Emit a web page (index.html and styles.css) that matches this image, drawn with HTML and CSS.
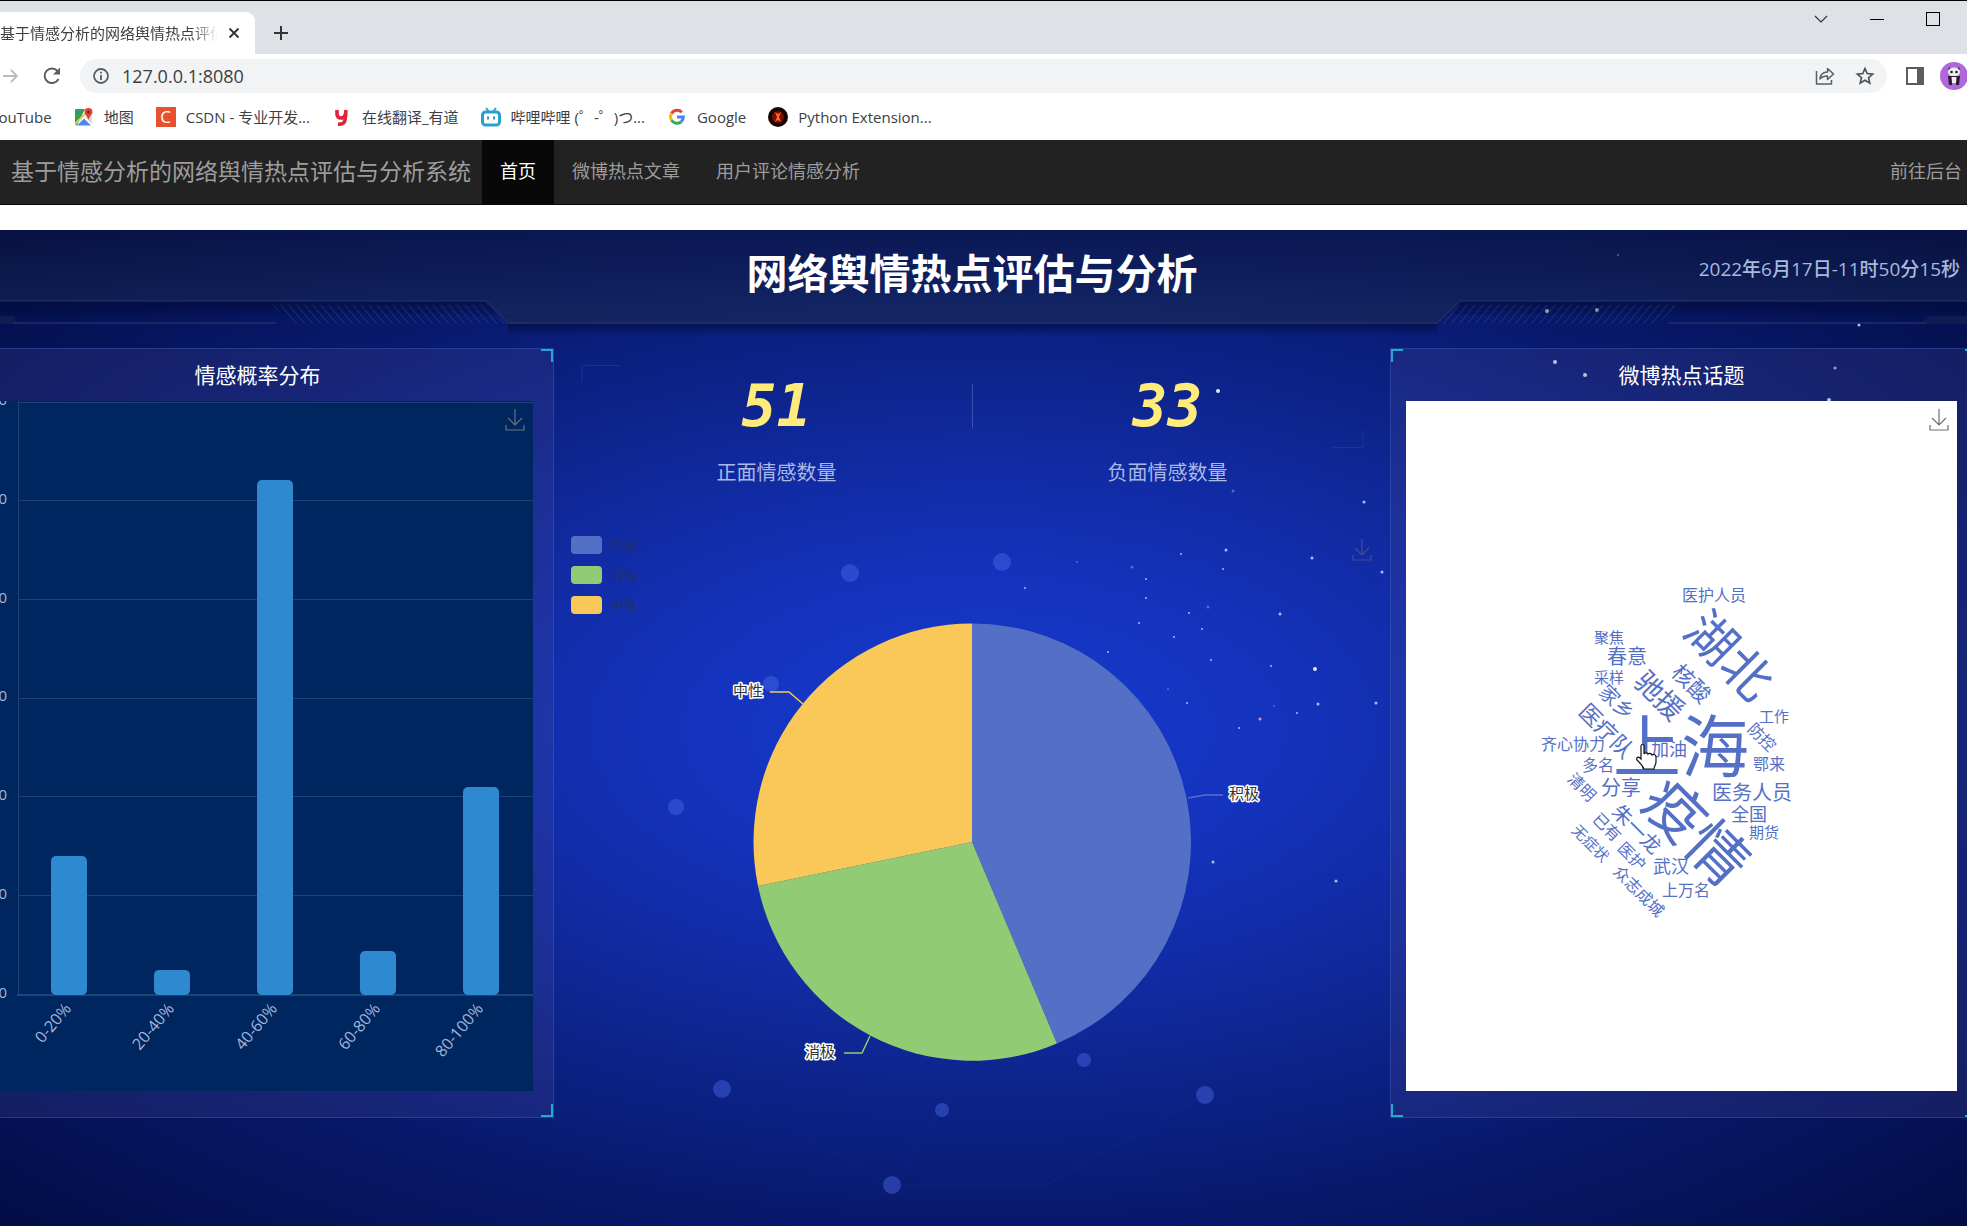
FILE: index.html
```html
<!DOCTYPE html>
<html lang="zh-CN">
<head>
<meta charset="utf-8">
<title>基于情感分析的网络舆情热点评估与分析系统</title>
<link rel="stylesheet" href="styles.css">
</head>
<body>
<div class="browser">
  <div class="tabstrip">
    <div class="tab">
      <span class="tab-title">基于情感分析的网络舆情热点评估</span>
      <button class="icon-btn" aria-label="关闭标签页"><svg width="12" height="12" viewBox="0 0 12 12"><path d="M1.500 1.500l9 9M10.500 1.500l-9 9" stroke="#333" stroke-width="1.800"/></svg></button>
    </div>
    <button class="icon-btn new-tab" aria-label="新标签页"><svg width="16" height="16" viewBox="0 0 16 16"><path d="M8 1v14M1 8h14" stroke="#333" stroke-width="2"/></svg></button>
    <div class="window-controls">
      <button class="icon-btn" aria-label="搜索标签页"><svg width="14" height="14" viewBox="0 0 14 14"><path d="M1 4l6 6 6-6" fill="none" stroke="#333" stroke-width="1.200"/></svg></button>
      <button class="icon-btn" aria-label="最小化"><svg width="14" height="14" viewBox="0 0 14 14"><path d="M0 7.500h14" stroke="#000" stroke-width="1"/></svg></button>
      <button class="icon-btn" aria-label="最大化"><svg width="14" height="14" viewBox="0 0 14 14"><rect x=".5" y=".5" width="13" height="13" fill="none" stroke="#000"/></svg></button>
    </div>
  </div>
  <div class="toolbar">
    <button class="icon-btn" aria-label="前进"><svg width="18" height="16" viewBox="0 0 18 16"><path d="M1 8h14M9 2l6 6-6 6" fill="none" stroke="#b9bbbe" stroke-width="1.800"/></svg></button>
    <button class="icon-btn" aria-label="重新加载"><svg width="20" height="20" viewBox="0 0 20 20"><path d="M16.500 13A7.300 7.300 0 1 1 15.500 5" fill="none" stroke="#5a5d61" stroke-width="2"/><path d="M18 1.500v7h-7z" fill="#5a5d61"/></svg></button>
    <div class="omnibox">
      <svg width="18" height="18" viewBox="0 0 18 18"><circle cx="9" cy="9" r="7" fill="none" stroke="#5a5d61" stroke-width="1.800"/><path d="M9 8v5M9 4.800v1.800" stroke="#5a5d61" stroke-width="1.800"/></svg>
      <input class="url" type="text" aria-label="地址栏" value="127.0.0.1:8080">
      <button class="icon-btn" aria-label="分享"><svg width="20" height="20" viewBox="0 0 20 20"><path d="M1.500 5v13h15v-4M5 13c.5-5 3-7 7.500-7V2.500l6 5.500-6 5.500V10C9 10 7 10.500 5 13z" fill="none" stroke="#5a5d61" stroke-width="1.500" stroke-linejoin="round"/></svg></button>
      <button class="icon-btn" aria-label="收藏"><svg width="20" height="20" viewBox="0 0 20 20"><path d="M10 2.500l2.200 5.100 5.500.5-4.200 3.600 1.300 5.400L10 14.200l-4.800 2.900 1.300-5.400-4.200-3.600 5.500-.5z" fill="none" stroke="#4b4e52" stroke-width="1.600"/></svg></button>
    </div>
    <button class="icon-btn" aria-label="侧边栏"><svg width="18" height="18" viewBox="0 0 18 18"><rect x="1" y="1" width="16" height="16" fill="#fff" stroke="#5a5d61" stroke-width="2"/><path d="M11 1h6v16h-6z" fill="#5a5d61"/></svg></button>
    <button class="icon-btn avatar" aria-label="用户"><svg width="28" height="28" viewBox="0 0 28 28"><circle cx="14" cy="14" r="14" fill="#b067dc"/><path d="M8 8l1-3 2 2zM20 8l-1-3-2 2z" fill="#2b2b2b"/><ellipse cx="14" cy="10" rx="6" ry="4.500" fill="#eee"/><circle cx="11.500" cy="10" r="1.300" fill="#222"/><circle cx="16.500" cy="10" r="1.300" fill="#222"/><path d="M8 14h12l-1 9h-3v-5h-4v5H9z" fill="#2a1a33"/><path d="M11.500 15h5l-.5 6h-4z" fill="#eee"/></svg></button>
  </div>
  <nav class="bookmarks" aria-label="书签">
    <a href="#">YouTube</a>
    <a href="#"><svg width="20" height="20" viewBox="0 0 20 20"><path d="M1 3q0-1 1-1h9L3 18.500q-2 0-2-2z" fill="#30a058"/><path d="M3 18.500l7-7 7 7z" fill="#4a8af0"/><path d="M11 10l7 7V9z" fill="#d5d8dc"/><path d="M1 17L13 5" stroke="#fbc33a" stroke-width="2"/><path d="M14.500 1a4 4 0 0 1 4 4c0 3-3 4-4 8-1-4-4-5-4-8a4 4 0 0 1 4-4z" fill="#e04438"/><circle cx="14.500" cy="5" r="1.500" fill="#801f18"/></svg>地图</a>
    <a href="#"><span class="csdn">C</span>CSDN - 专业开发...</a>
    <a href="#"><svg width="20" height="20" viewBox="0 0 20 20"><path d="M5 3v4q0 4 4 4 4 0 4.500-4l.5-4M14 6l-1 7q-1 5-7 4" fill="none" stroke="#e0243c" stroke-width="3.600"/></svg>在线翻译_有道</a>
    <a href="#"><svg width="20" height="20" viewBox="0 0 20 20"><path d="M5 1l3 4M15 1l-3 4" stroke="#2ba0cc" stroke-width="2"/><rect x="1.500" y="5" width="17" height="13" rx="3" fill="#fff" stroke="#2ba0cc" stroke-width="3"/><path d="M7 9.500v3M13 9.500v3" stroke="#2ba0cc" stroke-width="2"/></svg>哔哩哔哩 (゜-゜)つ...</a>
    <a href="#"><svg width="20" height="20" viewBox="0 0 20 20"><g fill="none" stroke-width="3"><path d="M4.500 6.500A6.500 6.500 0 0 1 14.800 5.200" stroke="#e04438"/><path d="M4.500 13.200a6.500 6.500 0 0 1 0-6.700" stroke="#fbbc05"/><path d="M14 15a6.500 6.500 0 0 1-9.500-1.800" stroke="#34a853"/><path d="M10 10h6.300a6.500 6.500 0 0 1-2.300 5" stroke="#4285f4"/></g></svg>Google</a>
    <a href="#"><svg width="20" height="20" viewBox="0 0 20 20"><circle cx="10" cy="10" r="10" fill="#180402"/><circle cx="10" cy="10" r="6" fill="#7c0d03"/><path d="M7 5l3 2 3-2-2 5 2 5-3-2-3 2 2-5z" fill="#ff6a20"/></svg>Python Extension...</a>
  </nav>
</div>

<header class="navbar">
  <a class="brand" href="#">基于情感分析的网络舆情热点评估与分析系统</a>
  <nav class="menu" aria-label="主导航">
    <a class="active" href="#">首页</a>
    <a href="#">微博热点文章</a>
    <a href="#">用户评论情感分析</a>
  </nav>
  <a class="admin" href="#">前往后台</a>
</header>

<main class="dash">
  <svg class="sky" viewBox="0 0 1967 996" preserveAspectRatio="xMidYMin slice" aria-hidden="true">
    <g fill="#4a68e6" opacity=".45">
      <circle cx="850" cy="343" r="9"/><circle cx="1002" cy="332" r="9"/><circle cx="771" cy="454" r="8"/><circle cx="676" cy="577" r="8"/><circle cx="722" cy="859" r="9"/><circle cx="942" cy="880" r="7"/><circle cx="1084" cy="830" r="7"/><circle cx="1205" cy="865" r="9"/><circle cx="892" cy="955" r="9"/>
    </g>
    <g fill="none" stroke="#3048c0" opacity=".15"><path d="M722 859L892 955 942 880M900 956h144L1205 865M1080 780v90"/></g>
    <g fill="none" stroke="#3c55c8" opacity=".3"><path d="M582 152V135.500H620M1363 200V217.500H1332"/></g>
    <g fill="#dfeaf0">
      <circle cx="1547" cy="81" r="2"/><circle cx="1597" cy="80" r="2"/><circle cx="1555" cy="132" r="2"/><circle cx="1585" cy="145" r="2"/><circle cx="1218" cy="161" r="2"/><circle cx="1315" cy="439" r="2"/><circle cx="1829" cy="170" r="2"/>
    </g>
    <g fill="#a9bdf0">
      <circle cx="1618" cy="25" r="1"/><circle cx="1859" cy="95" r="1.500"/><circle cx="1835" cy="138" r="1.500"/><circle cx="1364" cy="272" r="1.500"/><circle cx="1312" cy="328" r="1.500"/><circle cx="1226" cy="320" r="1.500"/><circle cx="1181" cy="324" r="1"/><circle cx="1223" cy="339" r="1"/><circle cx="1146" cy="349" r="1"/><circle cx="1025" cy="358" r="1"/><circle cx="1146" cy="368" r="1"/><circle cx="1189" cy="383" r="1"/><circle cx="1280" cy="384" r="1.500"/><circle cx="1139" cy="393" r="1"/><circle cx="1202" cy="399" r="1"/><circle cx="1174" cy="407" r="1"/><circle cx="1108" cy="422" r="1"/><circle cx="1211" cy="430" r="1"/><circle cx="1271" cy="436" r="1"/><circle cx="1187" cy="473" r="1"/><circle cx="1318" cy="474" r="1.500"/><circle cx="1297" cy="483" r="1"/><circle cx="1239" cy="498" r="1"/><circle cx="1376" cy="473" r="1.500"/><circle cx="1213" cy="632" r="1.500"/><circle cx="1336" cy="651" r="1.500"/><circle cx="1382" cy="342" r="1.500"/>
    </g>
    <g fill="#6f86dd" opacity=".7"><circle cx="1233" cy="261" r="1.500"/><circle cx="1077" cy="332" r="1"/><circle cx="1132" cy="337" r="1.500"/><circle cx="1208" cy="377" r="1.500"/><circle cx="1168" cy="459" r="1"/><circle cx="1274" cy="476" r="1"/></g>
    <circle cx="1260" cy="489" r="1.500" fill="#e89a8a"/>
  </svg>
  <svg class="frame" viewBox="0 0 1967 100" preserveAspectRatio="none" aria-hidden="true">
    <defs>
      <linearGradient id="band" x1="0" y1="0" x2="0" y2="1"><stop offset="0" stop-color="#0c1740" stop-opacity=".5"/><stop offset="1" stop-color="#192b58" stop-opacity=".65"/></linearGradient>
      <linearGradient id="shade" x1="0" y1="0" x2="0" y2="1"><stop offset="0" stop-color="#020a38" stop-opacity=".6"/><stop offset="1" stop-color="#020a38" stop-opacity="0"/></linearGradient>
      <pattern id="hatchL" width="8" height="20" patternUnits="userSpaceOnUse" patternTransform="skewX(40)"><path d="M2 0v20" stroke="#2b3d80" stroke-width="2"/></pattern>
      <pattern id="hatchR" width="8" height="20" patternUnits="userSpaceOnUse" patternTransform="skewX(-40)"><path d="M2 0v20" stroke="#2b3d80" stroke-width="2"/></pattern>
    </defs>
    <path d="M0 71H486L508 94H1437L1460 71H1967V85H0z" fill="url(#shade)"/>
    <path d="M508 94H1437V106H508z" fill="url(#shade)"/>
    <path d="M0 0H1967V71H1460L1437 94H508L486 71H0z" fill="url(#band)"/>
    <path d="M0 71H486L508 93H1437L1460 71H1967" fill="none" stroke="#26356a" stroke-opacity=".5" stroke-width="2"/>
    <path d="M0 86h14l4 8H0zM1967 86h-38l-8 8h46z" fill="#1a2850" opacity=".5"/>
    <path d="M14 93h262M1925 93h-257" fill="none" stroke="#25356e" stroke-opacity=".6" stroke-width="2"/>
    <path d="M272 75H486L506 94H292z" fill="url(#hatchL)" opacity=".4"/>
    <path d="M1457 75H1678L1658 94H1437z" fill="url(#hatchR)" opacity=".4"/>
  </svg>
  <div class="stage">
    <div class="dash-head">
      <h1>网络舆情热点评估与分析</h1>
      <time class="clock">2022年6月17日-11时50分15秒</time>
    </div>
    <div class="columns">
      <section class="panel">
        <h2>情感概率分布</h2>
        <div class="chart chart-bar">
          <svg class="plot" viewBox="0 0 551 690" role="img" aria-label="情感概率分布">
            <g class="grid"><path d="M37 1.500H551M37 99.500H551M37 198.500H551M37 297.500H551M37 395.500H551M37 494.500H551M36.500 0V594"/></g>
            <path class="axis" d="M35 594H551"/>
            <g class="bars"><rect x="69" y="455" width="36" height="139" rx="5"/><rect x="172" y="569" width="36" height="25" rx="5"/><rect x="275" y="79" width="36" height="515" rx="5"/><rect x="378" y="550" width="36" height="44" rx="5"/><rect x="481" y="386" width="36" height="208" rx="5"/></g>
            <g class="ylab"><text x="25" y="4">120</text><text x="25" y="103">100</text><text x="25" y="202">80</text><text x="25" y="300">60</text><text x="25" y="399">40</text><text x="25" y="498">20</text><text x="25" y="597">0</text></g>
            <g class="xlab"><text transform="translate(90 608) rotate(-50)">0-20%</text><text transform="translate(193 608) rotate(-50)">20-40%</text><text transform="translate(296 608) rotate(-50)">40-60%</text><text transform="translate(399 608) rotate(-50)">60-80%</text><text transform="translate(502 608) rotate(-50)">80-100%</text></g>
          </svg>
          <button class="save" aria-label="保存为图片"><svg width="20" height="24" viewBox="0 0 20 24"><path d="M10 1v16M3 10l7 7 7-7M1 17v5h18v-5" fill="none" stroke="currentColor" stroke-width="1.200"/></svg></button>
        </div>
      </section>

      <section class="center">
        <div class="counts">
          <div class="count"><strong>51</strong><span>正面情感数量</span></div>
          <div class="count"><strong>33</strong><span>负面情感数量</span></div>
        </div>
        <div class="chart-pie">
          <ul class="legend"><li class="pos">积极</li><li class="neg">消极</li><li class="mid">中性</li></ul>
          <svg class="plot" viewBox="-418 -322 836 644" role="img" aria-label="情感占比">
            <path d="M0 0V-218.500A218.500 218.500 0 0 1 85 201.500z" fill="#5470c6"/>
            <path d="M0 0L85 201.500A218.500 218.500 0 0 1-214 44z" fill="#91cc75"/>
            <path d="M0 0L-214 44A218.500 218.500 0 0 1 0-218.500z" fill="#fac858"/>
            <g fill="none" stroke-width="1.500"><path d="M216-44l17-3h18" stroke="#5470c6"/><path d="M-102 194l-8 17h-18" stroke="#91cc75"/><path d="M-169-138l-14-12h-19" stroke="#fac858"/></g>
            <g class="slice"><text x="272" y="-43">积极</text><text x="-152" y="215">消极</text><text x="-224" y="-146">中性</text></g>
          </svg>
          <button class="save" aria-label="保存为图片"><svg width="20" height="24" viewBox="0 0 20 24"><path d="M10 1v16M3 10l7 7 7-7M1 17v5h18v-5" fill="none" stroke="currentColor" stroke-width="1.200"/></svg></button>
        </div>
      </section>

      <section class="panel">
        <h2>微博热点话题</h2>
        <div class="chart chart-words">
          <svg class="plot" viewBox="0 0 551 690" role="img" aria-label="微博热点话题">
            <g class="words">
              <g class="w68"><text x="275" y="344">上海</text></g>
              <g class="w60"><text transform="translate(291 430) rotate(45)">疫情</text></g>
              <g class="w50"><text transform="translate(324 254) rotate(45)">湖北</text></g>
              <g class="w28"><text transform="translate(254 294) rotate(45)">驰援</text></g>
              <g class="w22"><text transform="translate(286 282) rotate(45)">核酸</text><text transform="translate(201 329) rotate(45)">医疗队</text></g>
              <g class="w20"><text x="221" y="255">春意</text><text x="215" y="386">分享</text><text x="346" y="391">医务人员</text><text transform="translate(231 428) rotate(45)">朱一龙</text><text transform="translate(211 301) rotate(45)">家乡</text></g>
              <g class="w18"><text x="263" y="348">加油</text><text x="343" y="413">全国</text><text x="265" y="465">武汉</text></g>
              <g class="w16"><text x="308" y="194">医护人员</text><text x="167" y="343">齐心协力</text><text x="192" y="364">多名</text><text x="363" y="363">鄂来</text><text x="280" y="489">上万名</text><text transform="translate(356 336) rotate(45)">防控</text><text transform="translate(176 386) rotate(45)">清明</text><text transform="translate(201 426) rotate(45)">已有</text><text transform="translate(226 455) rotate(45)">医护</text><text transform="translate(233 490) rotate(45)">众志成城</text></g>
              <g class="w15"><text x="203" y="236">聚焦</text><text x="203" y="276">采样</text><text x="368" y="315">工作</text><text x="358" y="431">期货</text><text transform="translate(185 442) rotate(45)">无症状</text></g>
            </g>
            <path d="M235 345c0-2 3-2 3 0v8c1-2 4-1 4 0 1-1 3-1 4 1 1-1 4-1 4 2v5c0 3-2 4-2 7h-10c-1-3-5-7-7-9-1-2 1-4 3-2l1 1z" fill="#fff" stroke="#111" stroke-width="1.200"/>
          </svg>
          <button class="save" aria-label="保存为图片"><svg width="20" height="24" viewBox="0 0 20 24"><path d="M10 1v16M3 10l7 7 7-7M1 17v5h18v-5" fill="none" stroke="currentColor" stroke-width="1.200"/></svg></button>
        </div>
      </section>
    </div>
  </div>
</main>
</body>
</html>
```

FILE: styles.css
```css
* { box-sizing: border-box; }

body {
  margin: 0;
  min-height: 100vh;
  display: flex;
  flex-direction: column;
  overflow-x: hidden;
  background: #fff;
  font-family: "Open Sans", "Noto Sans CJK SC", sans-serif;
  font-size: 18px;
}

a { text-decoration: none; color: inherit; }

.icon-btn {
  display: flex;
  align-items: center;
  justify-content: center;
  flex: none;
  padding: 0;
  border: 0;
  background: none;
}

/* Browser window */
.browser { border-top: 1px solid #000; }

.tabstrip {
  display: flex;
  height: 53px;
  padding-top: 11px;
  background: #dee1e6;
}

.tab {
  display: flex;
  align-items: center;
  justify-content: space-between;
  width: 255px;
  padding-right: 15px;
  border-radius: 0 9px 0 0;
  background: #fff;
}

.tab-title {
  width: 218px;
  overflow: hidden;
  white-space: nowrap;
  font-size: 15px;
  line-height: 24px;
  color: #3c4043;
  -webkit-mask-image: linear-gradient(90deg, #000 88%, transparent);
  mask-image: linear-gradient(90deg, #000 88%, transparent);
}

.new-tab { width: 52px; padding-bottom: 1px; }

.window-controls {
  display: flex;
  align-items: flex-start;
  gap: 42px;
  margin-left: auto;
  padding-right: 27px;
}

.toolbar {
  display: flex;
  align-items: center;
  gap: 22px;
  height: 44px;
  padding: 0 0 0 2px;
}

.omnibox {
  display: flex;
  align-items: center;
  flex: 1;
  min-width: 0;
  gap: 12px;
  height: 34px;
  margin-left: -4px;
  padding: 0 12px;
  border-radius: 17px;
  background: #f1f3f4;
}

.url {
  flex: 1;
  min-width: 0;
  padding: 0;
  border: 0;
  outline: 0;
  background: none;
  font: 18px "Open Sans", "Noto Sans CJK SC", sans-serif;
  color: #3c4043;
}

.omnibox .icon-btn + .icon-btn { margin-left: 8px; }
.avatar { margin-left: -6px; margin-right: -1px; }
.omnibox + .icon-btn { margin-left: -3px; }

.bookmarks {
  display: flex;
  align-items: center;
  gap: 22px;
  height: 42px;
  margin-left: -10px;
  padding-bottom: 5px;
  white-space: nowrap;
  font-size: 15px;
  line-height: 20px;
  color: #3c4043;
}

.bookmarks a { display: flex; align-items: center; gap: 10px; }

.csdn {
  width: 20px;
  height: 20px;
  background: #e8512f;
  color: #fff;
  font-size: 17px;
  text-align: center;
}

/* Site navigation */
.navbar {
  display: flex;
  align-items: stretch;
  height: 65px;
  margin-bottom: 25px;
  border-bottom: 1px solid #080808;
  background: #222;
  color: #9d9d9d;
  line-height: 62px;
  white-space: nowrap;
}

.brand { padding: 0 11px; font-size: 23px; }
.menu { display: flex; }
.menu a { padding: 0 18px; }
.menu .active { background: #080808; color: #fff; }
.admin { margin-left: auto; padding-right: 5px; }

/* Dashboard */
.dash {
  position: relative;
  flex: 1;
  overflow: hidden;
  background: radial-gradient(ellipse at 50% 50%, #163bcd 0, #1433bd 22%, #0f2796 45%, #08196c 70%, #020d45 100%);
}

.sky, .frame { position: absolute; inset: 0; width: 100%; height: 100%; }
.frame { height: 100px; overflow: visible; }

.stage { position: relative; margin: 0 -11px 0 -34px; }

.dash-head {
  display: grid;
  grid-template-columns: 1fr auto 1fr;
  align-items: center;
  height: 88px;
  padding: 0 18px 2px;
}

h1 {
  grid-column: 2;
  margin: 0;
  font-size: 41px;
  line-height: 60px;
  color: #fff;
}

.clock {
  justify-self: end;
  padding-bottom: 10px;
  font-size: 19px;
  font-weight: 500;
  color: #a9b8de;
}

.columns {
  display: grid;
  grid-template-columns: minmax(0, 588fr) minmax(0, 836fr) minmax(0, 588fr);
  align-items: start;
  padding: 30px 0 40px;
}

.panel {
  position: relative;
  padding: 0 20px 26px 15px;
  border: 1px solid rgba(80, 120, 210, .3);
  background: rgba(70, 75, 150, .24);
}

.panel::before {
  content: "";
  position: absolute;
  inset: 0;
  --c: linear-gradient(#21aacd, #21aacd);
  background: var(--c) 0 0 / 12px 2px, var(--c) 0 0 / 2px 13px,
    var(--c) 100% 0 / 12px 2px, var(--c) 100% 0 / 2px 13px,
    var(--c) 0 100% / 12px 2px, var(--c) 0 100% / 2px 13px,
    var(--c) 100% 100% / 12px 2px, var(--c) 100% 100% / 2px 13px;
  background-repeat: no-repeat;
}

h2 {
  margin: 0;
  font-size: 21px;
  font-weight: 400;
  line-height: 52px;
  text-align: center;
  color: #fff;
}

.chart { position: relative; height: 690px; overflow: hidden; }
.chart-bar { background: #00265f; }
.chart-words { background: #fff; }
.plot { display: block; width: 100%; height: 100%; }

.save {
  position: absolute;
  top: 7px;
  right: 8px;
  padding: 0;
  border: 0;
  background: none;
  line-height: 0;
  color: #6e7079;
}

.grid path { stroke: #fff; stroke-opacity: .12; fill: none; }
.axis { stroke: #3a6496; stroke-width: 1; }
.bars { fill: #2f89cf; }
.ylab text { font-size: 15px; fill: #a3b6dc; text-anchor: end; }
.xlab text { font-size: 16px; fill: #a3b6dc; text-anchor: end; }

.center { padding: 17px 27px 0; }

.counts {
  position: relative;
  display: grid;
  grid-template-columns: 1fr 1fr;
  text-align: center;
}

.counts::before {
  content: "";
  position: absolute;
  left: 50%;
  top: 19px;
  height: 44px;
  border-left: 1px solid rgba(110, 130, 210, .45);
}

.count { display: grid; }

.count strong {
  font: italic 700 58px/82px "DejaVu Sans Mono", monospace;
  color: #ffeb7b;
}

.count span { font-size: 20px; line-height: 52px; color: #a9b8e6; }

.chart-pie { position: relative; height: 644px; margin: 21px -27px 0; }

.legend {
  position: absolute;
  left: 17px;
  top: 15px;
  display: grid;
  gap: 10px;
  margin: 0;
  padding: 0;
  list-style: none;
  font-size: 14px;
  line-height: 20px;
  color: #20306e;
}

.legend li { display: flex; align-items: center; gap: 8px; }
.legend li::before { content: ""; width: 31px; height: 18px; border-radius: 4px; background: #5470c6; }
.legend .neg::before { background: #91cc75; }
.legend .mid::before { background: #fac858; }

.chart-pie .save { top: 18px; right: 18px; color: #454b91; }

.slice text {
  font-size: 15px;
  text-anchor: middle;
  fill: #333;
  stroke: #fff;
  stroke-width: 3px;
  stroke-linejoin: round;
  paint-order: stroke;
}

/* Word cloud */
.words text { text-anchor: middle; dominant-baseline: central; fill: #5470c6; }
.w68 { font-size: 68px; }
.w60 { font-size: 60px; }
.w50 { font-size: 50px; }
.w28 { font-size: 28px; }
.w22 { font-size: 22px; }
.w20 { font-size: 20px; }
.w18 { font-size: 18px; }
.w16 { font-size: 16px; }
.w15 { font-size: 15px; }
```
